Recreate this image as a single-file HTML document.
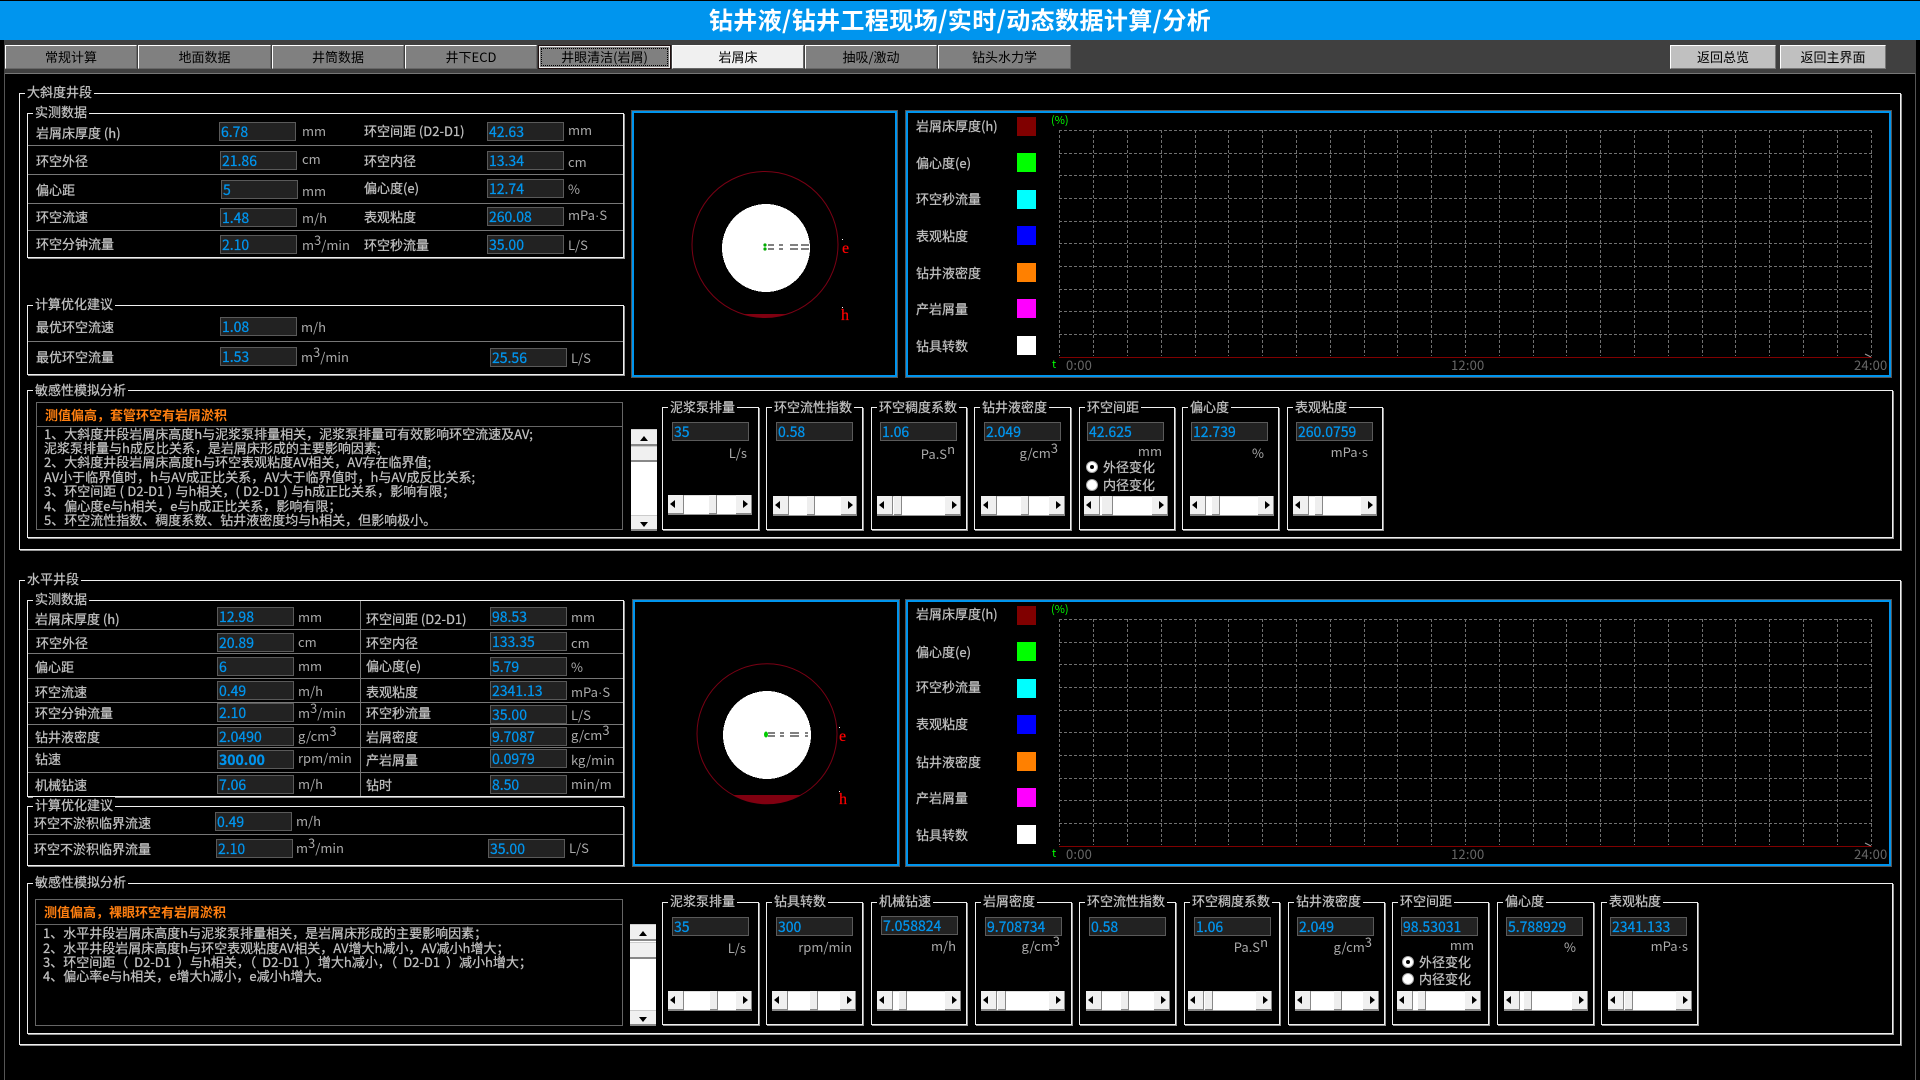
<!DOCTYPE html>
<html lang="zh"><head><meta charset="utf-8"><title>钻井液</title>
<style>
html,body{margin:0;padding:0;background:#000;width:1920px;height:1080px;overflow:hidden}
body{position:relative;font:13px/16px "WenQuanYi Zen Hei","Noto Sans CJK SC",sans-serif;color:#c0c0c0}
#top{position:absolute;left:0;top:1px;width:1920px;height:39px;background:#0095ee;color:#fff;font:bold 24px/36px "WenQuanYi Zen Hei","Noto Sans CJK SC",sans-serif;text-align:center;letter-spacing:.4px}
#bar{position:absolute;left:4px;top:40px;width:1912px;height:33px;background:#404040;border-bottom:1px solid #777}
#ln{position:absolute;left:4px;top:73px;width:1912px;height:1007px;border-left:1px solid #555;border-right:1px solid #555;box-sizing:border-box}
.tb{position:absolute;top:45px;height:24px;box-sizing:border-box;background:#808080;border:1px solid;border-color:#fff #666 #666 #fff;color:#000;text-align:center;line-height:22px}
.tb.on{background:#f0f0f0}.tb.bk{background:#c0c0c0;border-color:#fff #777 #777 #fff}
.tb.fc{border:1px solid #201010;box-shadow:inset 0 0 0 1px #eee;outline:0}
.tb.fc u{position:absolute;left:2px;top:2px;right:2px;bottom:2px;border:1px dotted #000;text-decoration:none;line-height:16px}
.g{position:absolute;box-sizing:border-box;border:1px solid #f0f0f0;box-shadow:1px 1px 0 #999}
.g>em{position:absolute;left:5px;top:-10px;padding:0 2px;background:#000;font-style:normal;white-space:nowrap;line-height:16px;-webkit-text-stroke:.25px #c0c0c0}
.g.f>em{top:-9px}
.d{position:absolute;height:1px;background:#777}
.t,.v,.r{position:absolute;white-space:nowrap}
.t,.r{line-height:16px;height:16px}
.t{-webkit-text-stroke:.25px #c0c0c0}
.r{width:90px;text-align:right;color:#aaa}
.t.u{color:#aaa;-webkit-text-stroke:0}
.dot{font-family:"Liberation Sans",sans-serif}
sup{font-size:13px;line-height:0;vertical-align:5px}
.v{width:77px;height:19px;box-sizing:border-box;background:#222;border:1px solid #5a5a5a;color:#0095ee;font-size:14px;line-height:18px;padding-left:1px;-webkit-text-stroke:.25px #0095ee}
.s{position:absolute;box-sizing:border-box;border:2px solid #0095ee;outline:1px solid #555;outline-offset:0}
.sw{position:absolute;width:19px;height:19px}
.t.o{color:#ff7f10;font-weight:bold;-webkit-text-stroke:0}
.h{position:absolute;height:20px;background:#fff;box-sizing:border-box;border-top:1px solid #ddd;border-bottom:1px solid #999}
.h b{position:absolute;top:-1px;height:20px;box-sizing:border-box;background:#f0f0f0;border-bottom:2px solid #888;border-right:1px solid #888;width:16px}
.h b.a{left:0}.h b.z{right:0}
.h b.a:after,.h b.z:after{content:"";position:absolute;top:5px;border:4px solid transparent}
.h b.a:after{left:2px;border-right:5px solid #000;border-left:0}
.h b.z:after{right:3px;border-left:5px solid #000;border-right:0}
.h b.th{width:8px;background:#eee}
.vs{position:absolute;width:26px;background:#fff}
.vs b{position:absolute;left:0;width:26px;background:#f0f0f0;border-bottom:2px solid #888;box-sizing:border-box;border-top:1px solid #ccc}
.vs b i{position:absolute;left:9px;top:6px;border:4px solid transparent;border-top:0;border-bottom:5px solid #000}
.vs b i.dn{border-bottom:0;border-top:5px solid #000}
.ra{position:absolute;width:12px;height:12px;border-radius:50%;background:#fff;box-sizing:border-box;border:1px solid #aaa}
.ra.c:after{content:"";position:absolute;left:3px;top:3px;width:4px;height:4px;border-radius:50%;background:#000}
.ser{position:absolute;font:16px/16px "Liberation Serif",serif;color:#f00;-webkit-text-stroke:.2px #f00}
.gn{position:absolute;color:#0f0;font-size:11px;line-height:12px}
.tk{position:absolute;color:#666;font-size:13px;line-height:16px;letter-spacing:.2px}
svg{position:absolute;left:0;top:0}
</style></head><body>
<div id="top">钻井液/钻井工程现场/实时/动态数据计算/分析</div>
<div id="bar"></div><div id="ln"></div>
<div class="tb" style="left:5px;width:132px">常规计算</div>
<div class="tb" style="left:138px;width:133px">地面数据</div>
<div class="tb" style="left:272px;width:132px">井筒数据</div>
<div class="tb" style="left:405px;width:132px">井下ECD</div>
<div class="tb fc" style="left:538px;width:133px"><u>井眼清洁(岩屑)</u></div>
<div class="tb on" style="left:672px;width:132px">岩屑床</div>
<div class="tb" style="left:805px;width:132px">抽吸/激动</div>
<div class="tb" style="left:938px;width:133px">钻头水力学</div>
<div class="tb bk" style="left:1670px;width:106px">返回总览</div>
<div class="tb bk" style="left:1780px;width:106px">返回主界面</div>

<div class="g" style="left:19px;top:93px;width:1882px;height:457px"><em>大斜度井段</em></div>
<div class="g" style="left:27px;top:113px;width:597px;height:145px"><em>实测数据</em></div>
<div class="d" style="left:28px;top:145px;width:595px"></div>
<div class="d" style="left:28px;top:174px;width:595px"></div>
<div class="d" style="left:28px;top:203px;width:595px"></div>
<div class="d" style="left:28px;top:230px;width:595px"></div>
<span class="t" style="left:36px;top:125px">岩屑床厚度 (h)</span><div class="v" style="left:219px;top:122px">6.78</div><span class="t u" style="left:302px;top:123px">mm</span>
<span class="t" style="left:364px;top:123px">环空间距 (D2-D1)</span><div class="v" style="left:487px;top:122px">42.63</div><span class="t u" style="left:568px;top:122px">mm</span>
<span class="t" style="left:36px;top:153px">环空外径</span><div class="v" style="left:220px;top:151px">21.86</div><span class="t u" style="left:302px;top:151px">cm</span>
<span class="t" style="left:364px;top:153px">环空内径</span><div class="v" style="left:487px;top:151px">13.34</div><span class="t u" style="left:568px;top:154px">cm</span>
<span class="t" style="left:36px;top:182px">偏心距</span><div class="v" style="left:221px;top:180px">5</div><span class="t u" style="left:302px;top:183px">mm</span>
<span class="t" style="left:364px;top:180px">偏心度(e)</span><div class="v" style="left:487px;top:179px">12.74</div><span class="t u" style="left:568px;top:181px">%</span>
<span class="t" style="left:36px;top:209px">环空流速</span><div class="v" style="left:220px;top:208px">1.48</div><span class="t u" style="left:302px;top:210px">m/h</span>
<span class="t" style="left:364px;top:209px">表观粘度</span><div class="v" style="left:487px;top:207px">260.08</div><span class="t u" style="left:568px;top:207px">mPa<span class="dot">·</span>S</span>
<span class="t" style="left:36px;top:236px">环空分钟流量</span><div class="v" style="left:220px;top:235px">2.10</div><span class="t u" style="left:302px;top:237px">m<sup>3</sup>/min</span>
<span class="t" style="left:364px;top:237px">环空秒流量</span><div class="v" style="left:487px;top:235px">35.00</div><span class="t u" style="left:568px;top:237px">L/S</span>

<div class="g" style="left:27px;top:305px;width:597px;height:70px"><em>计算优化建议</em></div>
<div class="d" style="left:28px;top:341px;width:595px"></div>
<span class="t" style="left:36px;top:319px">最优环空流速</span><div class="v" style="left:220px;top:317px">1.08</div><span class="t u" style="left:301px;top:319px">m/h</span>
<span class="t" style="left:36px;top:349px">最优环空流量</span><div class="v" style="left:220px;top:347px">1.53</div><span class="t u" style="left:301px;top:349px">m<sup>3</sup>/min</span>
<div class="v" style="left:490px;top:348px">25.56</div><span class="t u" style="left:571px;top:350px">L/S</span>

<div class="s" style="left:632px;top:111px;width:265px;height:266px"></div>
<div class="s" style="left:906px;top:111px;width:985px;height:266px"></div>
<span class="t" style="left:916px;top:118px">岩屑床厚度(h)</span><div class="sw" style="left:1017px;top:117px;background:#800000"></div>
<span class="t" style="left:916px;top:155px">偏心度(e)</span><div class="sw" style="left:1017px;top:153px;background:#0f0"></div>
<span class="t" style="left:916px;top:191px">环空秒流量</span><div class="sw" style="left:1017px;top:190px;background:#0ff"></div>
<span class="t" style="left:916px;top:228px">表观粘度</span><div class="sw" style="left:1017px;top:226px;background:#00f"></div>
<span class="t" style="left:916px;top:265px">钻井液密度</span><div class="sw" style="left:1017px;top:263px;background:#ff8000"></div>
<span class="t" style="left:916px;top:301px">产岩屑量</span><div class="sw" style="left:1017px;top:299px;background:#f0f"></div>
<span class="t" style="left:916px;top:338px">钻具转数</span><div class="sw" style="left:1017px;top:336px;background:#fff"></div>
<span class="gn" style="left:1051px;top:114px">(%)</span>
<span class="gn" style="left:1052px;top:358px">t</span>
<span class="tk" style="left:1066px;top:357px">0:00</span><span class="tk" style="left:1451px;top:357px">12:00</span><span class="tk" style="left:1854px;top:357px">24:00</span>

<div class="g f" style="left:27px;top:390px;width:1866px;height:148px"><em>敏感性模拟分析</em></div>
<div class="g" style="left:36px;top:402px;width:587px;height:128px;border-color:#666;box-shadow:none"></div>
<div class="d" style="left:36px;top:426px;width:587px;background:#666"></div>
<span class="t o" style="left:45px;top:407px">测值偏高，套管环空有岩屑淤积</span>
<span class="t" style="left:44px;top:426px">1、大斜度井段岩屑床高度h与泥浆泵排量相关，泥浆泵排量可有效影响环空流速及AV;</span>
<span class="t" style="left:44px;top:440px">泥浆泵排量与h成反比关系，是岩屑床形成的主要影响因素;</span>
<span class="t" style="left:44px;top:454px">2、大斜度井段岩屑床高度h与环空表观粘度AV相关，AV存在临界值;</span>
<span class="t" style="left:44px;top:469px">AV小于临界值时，h与AV成正比关系，AV大于临界值时，h与AV成反比关系;</span>
<span class="t" style="left:44px;top:483px;word-spacing:.5px">3、环空间距 ( D2-D1 ) 与h相关，( D2-D1 ) 与h成正比关系，影响有限；</span>
<span class="t" style="left:44px;top:498px">4、偏心度e与h相关，e与h成正比关系，影响有限；</span>
<span class="t" style="left:44px;top:512px">5、环空流性指数、稠度系数、钻井液密度均与h相关，但影响极小。</span>
<div class="vs" style="left:631px;top:429px;height:102px"><b style="top:0;height:17px"><i></i></b><b style="top:17px;height:16px"></b><b style="bottom:0;height:16px"><i class="dn"></i></b></div>

<div class="g f" style="left:662px;top:407px;width:97px;height:123px"><em>泥浆泵排量</em></div>
<div class="g f" style="left:766px;top:407px;width:97px;height:123px"><em>环空流性指数</em></div>
<div class="g f" style="left:871px;top:407px;width:96px;height:123px"><em>环空稠度系数</em></div>
<div class="g f" style="left:974px;top:407px;width:97px;height:123px"><em>钻井液密度</em></div>
<div class="g f" style="left:1079px;top:407px;width:96px;height:123px"><em>环空间距</em></div>
<div class="g f" style="left:1182px;top:407px;width:97px;height:123px"><em>偏心度</em></div>
<div class="g f" style="left:1287px;top:407px;width:96px;height:123px"><em>表观粘度</em></div>
<div class="v" style="left:672px;top:422px">35</div><span class="r" style="left:657px;top:445px">L/s</span>
<div class="v" style="left:776px;top:422px">0.58</div>
<div class="v" style="left:880px;top:422px">1.06</div><span class="r" style="left:865px;top:446px">Pa.S<sup>n</sup></span>
<div class="v" style="left:984px;top:422px">2.049</div><span class="r" style="left:968px;top:445px">g/cm<sup>3</sup></span>
<div class="v" style="left:1087px;top:422px">42.625</div><span class="r" style="left:1072px;top:443px">mm</span>
<div class="v" style="left:1191px;top:422px">12.739</div><span class="r" style="left:1174px;top:445px">%</span>
<div class="v" style="left:1296px;top:422px">260.0759</div><span class="r" style="left:1278px;top:444px">mPa<span class="dot">·</span>s</span>
<div class="ra c" style="left:1086px;top:461px"></div><span class="t" style="left:1103px;top:459px">外径变化</span>
<div class="ra" style="left:1086px;top:479px"></div><span class="t" style="left:1103px;top:477px">内径变化</span>
<div class="h" style="left:668px;top:495px;width:84px"><b class="a"></b><b class="z"></b><b class="th" style="left:41px"></b></div>
<div class="h" style="left:773px;top:496px;width:84px"><b class="a"></b><b class="z"></b><b class="th" style="left:34px"></b></div>
<div class="h" style="left:877px;top:496px;width:84px"><b class="a"></b><b class="z"></b><b class="th" style="left:17px"></b></div>
<div class="h" style="left:981px;top:496px;width:84px"><b class="a"></b><b class="z"></b><b class="th" style="left:40px"></b></div>
<div class="h" style="left:1084px;top:496px;width:84px"><b class="a"></b><b class="z"></b><b class="th" style="left:18px;width:11px"></b></div>
<div class="h" style="left:1190px;top:496px;width:84px"><b class="a"></b><b class="z"></b><b class="th" style="left:22px"></b></div>
<div class="h" style="left:1293px;top:496px;width:84px"><b class="a"></b><b class="z"></b><b class="th" style="left:22px"></b></div>

<div class="g" style="left:19px;top:580px;width:1882px;height:465px"><em>水平井段</em></div>
<div class="g" style="left:27px;top:600px;width:597px;height:197px"><em>实测数据</em></div>
<div class="d" style="left:28px;top:629px;width:595px"></div>
<div class="d" style="left:28px;top:653px;width:595px"></div>
<div class="d" style="left:28px;top:678px;width:595px"></div>
<div class="d" style="left:28px;top:702px;width:595px"></div>
<div class="d" style="left:28px;top:724px;width:595px"></div>
<div class="d" style="left:28px;top:747px;width:595px"></div>
<div class="d" style="left:28px;top:772px;width:595px"></div>
<div class="d" style="left:360px;top:601px;width:1px;height:195px"></div>
<span class="t" style="left:35px;top:611px">岩屑床厚度 (h)</span><div class="v" style="left:217px;top:607px">12.98</div><span class="t u" style="left:298px;top:609px">mm</span>
<span class="t" style="left:366px;top:611px">环空间距 (D2-D1)</span><div class="v" style="left:490px;top:607px">98.53</div><span class="t u" style="left:571px;top:609px">mm</span>
<span class="t" style="left:36px;top:635px">环空外径</span><div class="v" style="left:217px;top:633px">20.89</div><span class="t u" style="left:298px;top:634px">cm</span>
<span class="t" style="left:366px;top:635px">环空内径</span><div class="v" style="left:490px;top:632px">133.35</div><span class="t u" style="left:571px;top:635px">cm</span>
<span class="t" style="left:35px;top:659px">偏心距</span><div class="v" style="left:217px;top:657px">6</div><span class="t u" style="left:298px;top:658px">mm</span>
<span class="t" style="left:366px;top:658px">偏心度(e)</span><div class="v" style="left:490px;top:657px">5.79</div><span class="t u" style="left:571px;top:659px">%</span>
<span class="t" style="left:35px;top:684px">环空流速</span><div class="v" style="left:217px;top:681px">0.49</div><span class="t u" style="left:298px;top:683px">m/h</span>
<span class="t" style="left:366px;top:684px">表观粘度</span><div class="v" style="left:490px;top:681px">2341.13</div><span class="t u" style="left:571px;top:684px">mPa<span class="dot">·</span>S</span>
<span class="t" style="left:35px;top:705px">环空分钟流量</span><div class="v" style="left:217px;top:703px">2.10</div><span class="t u" style="left:298px;top:705px">m<sup>3</sup>/min</span>
<span class="t" style="left:366px;top:705px">环空秒流量</span><div class="v" style="left:490px;top:705px">35.00</div><span class="t u" style="left:571px;top:707px">L/S</span>
<span class="t" style="left:35px;top:729px">钻井液密度</span><div class="v" style="left:217px;top:727px">2.0490</div><span class="t u" style="left:298px;top:728px">g/cm<sup>3</sup></span>
<span class="t" style="left:366px;top:729px">岩屑密度</span><div class="v" style="left:490px;top:727px">9.7087</div><span class="t u" style="left:571px;top:727px">g/cm<sup>3</sup></span>
<span class="t" style="left:35px;top:751px">钻速</span><div class="v" style="left:217px;top:750px;font-weight:bold">300.00</div><span class="t u" style="left:298px;top:750px">rpm/min</span>
<span class="t" style="left:366px;top:752px">产岩屑量</span><div class="v" style="left:490px;top:749px">0.0979</div><span class="t u" style="left:571px;top:752px">kg/min</span>
<span class="t" style="left:35px;top:777px">机械钻速</span><div class="v" style="left:217px;top:775px">7.06</div><span class="t u" style="left:298px;top:776px">m/h</span>
<span class="t" style="left:366px;top:777px">钻时</span><div class="v" style="left:490px;top:775px">8.50</div><span class="t u" style="left:571px;top:776px">min/m</span>

<div class="g" style="left:27px;top:806px;width:597px;height:60px"><em>计算优化建议</em></div>
<div class="d" style="left:28px;top:834px;width:595px"></div>
<span class="t" style="left:34px;top:815px">环空不淤积临界流速</span><div class="v" style="left:215px;top:812px">0.49</div><span class="t u" style="left:296px;top:813px">m/h</span>
<span class="t" style="left:34px;top:841px">环空不淤积临界流量</span><div class="v" style="left:216px;top:839px">2.10</div><span class="t u" style="left:296px;top:840px">m<sup>3</sup>/min</span>
<div class="v" style="left:488px;top:839px">35.00</div><span class="t u" style="left:569px;top:840px">L/S</span>

<div class="s" style="left:633px;top:600px;width:266px;height:266px"></div>
<div class="s" style="left:906px;top:600px;width:985px;height:266px"></div>
<span class="t" style="left:916px;top:606px">岩屑床厚度(h)</span><div class="sw" style="left:1017px;top:606px;background:#800000"></div>
<span class="t" style="left:916px;top:644px">偏心度(e)</span><div class="sw" style="left:1017px;top:642px;background:#0f0"></div>
<span class="t" style="left:916px;top:679px">环空秒流量</span><div class="sw" style="left:1017px;top:679px;background:#0ff"></div>
<span class="t" style="left:916px;top:716px">表观粘度</span><div class="sw" style="left:1017px;top:715px;background:#00f"></div>
<span class="t" style="left:916px;top:754px">钻井液密度</span><div class="sw" style="left:1017px;top:752px;background:#ff8000"></div>
<span class="t" style="left:916px;top:790px">产岩屑量</span><div class="sw" style="left:1017px;top:788px;background:#f0f"></div>
<span class="t" style="left:916px;top:827px">钻具转数</span><div class="sw" style="left:1017px;top:825px;background:#fff"></div>
<span class="gn" style="left:1051px;top:603px">(%)</span>
<span class="gn" style="left:1052px;top:847px">t</span>
<span class="tk" style="left:1066px;top:846px">0:00</span><span class="tk" style="left:1451px;top:846px">12:00</span><span class="tk" style="left:1854px;top:846px">24:00</span>

<div class="g" style="left:27px;top:883px;width:1866px;height:151px"><em>敏感性模拟分析</em></div>
<div class="g" style="left:35px;top:899px;width:588px;height:127px;border-color:#666;box-shadow:none"></div>
<div class="d" style="left:35px;top:924px;width:588px;background:#666"></div>
<span class="t o" style="left:44px;top:904px">测值偏高，裸眼环空有岩屑淤积</span>
<span class="t" style="left:43px;top:925px">1、水平井段岩屑床高度h与泥浆泵排量相关，是岩屑床形成的主要影响因素；</span>
<span class="t" style="left:43px;top:940px">2、水平井段岩屑床高度h与环空表观粘度AV相关，AV增大h减小，AV减小h增大；</span>
<span class="t" style="left:43px;top:954px;word-spacing:3px">3、环空间距（ D2-D1 ）与h相关，（ D2-D1 ）增大h减小，（ D2-D1 ）减小h增大；</span>
<span class="t" style="left:43px;top:968px">4、偏心率e与h相关，e增大h减小，e减小h增大。</span>
<div class="vs" style="left:630px;top:924px;height:102px"><b style="top:0;height:17px"><i></i></b><b style="top:18px;height:17px"></b><b style="bottom:0;height:16px"><i class="dn"></i></b></div>

<div class="g" style="left:662px;top:902px;width:97px;height:123px"><em>泥浆泵排量</em></div>
<div class="g" style="left:766px;top:902px;width:97px;height:123px"><em>钻具转数</em></div>
<div class="g" style="left:871px;top:902px;width:96px;height:123px"><em>机械钻速</em></div>
<div class="g" style="left:975px;top:902px;width:97px;height:123px"><em>岩屑密度</em></div>
<div class="g" style="left:1079px;top:902px;width:97px;height:123px"><em>环空流性指数</em></div>
<div class="g" style="left:1184px;top:902px;width:96px;height:123px"><em>环空稠度系数</em></div>
<div class="g" style="left:1288px;top:902px;width:97px;height:123px"><em>钻井液密度</em></div>
<div class="g" style="left:1392px;top:902px;width:97px;height:123px"><em>环空间距</em></div>
<div class="g" style="left:1497px;top:902px;width:97px;height:123px"><em>偏心度</em></div>
<div class="g" style="left:1601px;top:902px;width:97px;height:123px"><em>表观粘度</em></div>
<div class="v" style="left:672px;top:917px">35</div><span class="r" style="left:656px;top:940px">L/s</span>
<div class="v" style="left:776px;top:917px">300</div><span class="r" style="left:762px;top:939px">rpm/min</span>
<div class="v" style="left:881px;top:916px">7.058824</div><span class="r" style="left:866px;top:938px">m/h</span>
<div class="v" style="left:985px;top:917px">9.708734</div><span class="r" style="left:970px;top:938px">g/cm<sup>3</sup></span>
<div class="v" style="left:1089px;top:917px">0.58</div>
<div class="v" style="left:1194px;top:917px">1.06</div><span class="r" style="left:1178px;top:939px">Pa.S<sup>n</sup></span>
<div class="v" style="left:1297px;top:917px">2.049</div><span class="r" style="left:1282px;top:939px">g/cm<sup>3</sup></span>
<div class="v" style="left:1401px;top:917px">98.53031</div><span class="r" style="left:1384px;top:937px">mm</span>
<div class="v" style="left:1506px;top:917px">5.788929</div><span class="r" style="left:1486px;top:939px">%</span>
<div class="v" style="left:1610px;top:917px">2341.133</div><span class="r" style="left:1598px;top:938px">mPa<span class="dot">·</span>s</span>
<div class="ra c" style="left:1402px;top:956px"></div><span class="t" style="left:1419px;top:954px">外径变化</span>
<div class="ra" style="left:1402px;top:973px"></div><span class="t" style="left:1419px;top:971px">内径变化</span>
<div class="h" style="left:668px;top:991px;width:84px"><b class="a"></b><b class="z"></b><b class="th" style="left:42px"></b></div>
<div class="h" style="left:772px;top:991px;width:84px"><b class="a"></b><b class="z"></b><b class="th" style="left:38px"></b></div>
<div class="h" style="left:877px;top:991px;width:84px"><b class="a"></b><b class="z"></b><b class="th" style="left:22px"></b></div>
<div class="h" style="left:981px;top:991px;width:84px"><b class="a"></b><b class="z"></b><b class="th" style="left:17px"></b></div>
<div class="h" style="left:1086px;top:991px;width:84px"><b class="a"></b><b class="z"></b><b class="th" style="left:35px"></b></div>
<div class="h" style="left:1188px;top:991px;width:84px"><b class="a"></b><b class="z"></b><b class="th" style="left:17px"></b></div>
<div class="h" style="left:1295px;top:991px;width:84px"><b class="a"></b><b class="z"></b><b class="th" style="left:39px"></b></div>
<div class="h" style="left:1397px;top:991px;width:84px"><b class="a"></b><b class="z"></b><b class="th" style="left:21px"></b></div>
<div class="h" style="left:1504px;top:991px;width:84px"><b class="a"></b><b class="z"></b><b class="th" style="left:20px"></b></div>
<div class="h" style="left:1608px;top:991px;width:84px"><b class="a"></b><b class="z"></b><b class="th" style="left:17px"></b></div>

<svg width="1920" height="1080" viewBox="0 0 1920 1080">
<defs><g id="gr" fill="none" stroke="#707070" stroke-dasharray="3 2" shape-rendering="crispEdges">
<path d="M1059 130.5H1872M1059 153.5H1872M1059 175.5H1872M1059 198.5H1872M1059 221.5H1872M1059 243.5H1872M1059 266.5H1872M1059 289.5H1872M1059 311.5H1872M1059 334.5H1872"/>
<path d="M1059.5 130V356M1093.5 130V356M1127.5 130V356M1161.5 130V356M1195.5 130V356M1228.5 130V356M1262.5 130V356M1296.5 130V356M1330.5 130V356M1364.5 130V356M1397.5 130V356M1431.5 130V356M1465.5 130V356M1499.5 130V356M1533.5 130V356M1566.5 130V356M1600.5 130V356M1634.5 130V356M1668.5 130V356M1702.5 130V356M1735.5 130V356M1769.5 130V356M1803.5 130V356M1837.5 130V356M1871.5 130V356"/>
</g></defs>
<use href="#gr"/><use href="#gr" transform="translate(0 489)"/>
<path d="M1059 357.5H1872M1059 846.5H1872" stroke="#800000" shape-rendering="crispEdges"/>
<path d="M1865 354L1871 357M1865 843L1871 846" stroke="#999"/>
<circle cx="765" cy="244.5" r="73" fill="none" stroke="#7a0014"/>
<circle cx="766" cy="248" r="44" fill="#fff" shape-rendering="crispEdges"/>
<path d="M743 314A73 73 0 0 0 787 314Z" fill="#800010"/>
<path d="M768 245H774M779 245H783M790 245H798M801 245H809M768 249H774M779 249H783M790 249H798M801 249H809" stroke="#000" shape-rendering="crispEdges"/>
<circle cx="765" cy="245" r="1.6" fill="#0a0"/><circle cx="765" cy="249" r="1.6" fill="#0a0"/>
<rect x="842" y="239" width="1" height="1" fill="#fff"/><rect x="842" y="307" width="1" height="1" fill="#fff"/>
<circle cx="767" cy="733.8" r="70" fill="none" stroke="#7a0014"/>
<circle cx="767" cy="735" r="44" fill="#fff" shape-rendering="crispEdges"/>
<path d="M733 795A70 70 0 0 0 801 795Z" fill="#800010"/>
<path d="M768 733H775M780 733H784M790 733H799M805 733H808M768 736H775M780 736H784M790 736H799M805 736H808" stroke="#000" shape-rendering="crispEdges"/>
<ellipse cx="766" cy="734.5" rx="2" ry="3" fill="#0c0"/>
<rect x="839" y="727" width="1" height="1" fill="#fff"/><rect x="839" y="791" width="1" height="1" fill="#fff"/>
</svg>
<span class="ser" style="left:842px;top:241px">e</span>
<span class="ser" style="left:841px;top:308px">h</span>
<span class="ser" style="left:839px;top:729px">e</span>
<span class="ser" style="left:839px;top:792px">h</span>
</body></html>
